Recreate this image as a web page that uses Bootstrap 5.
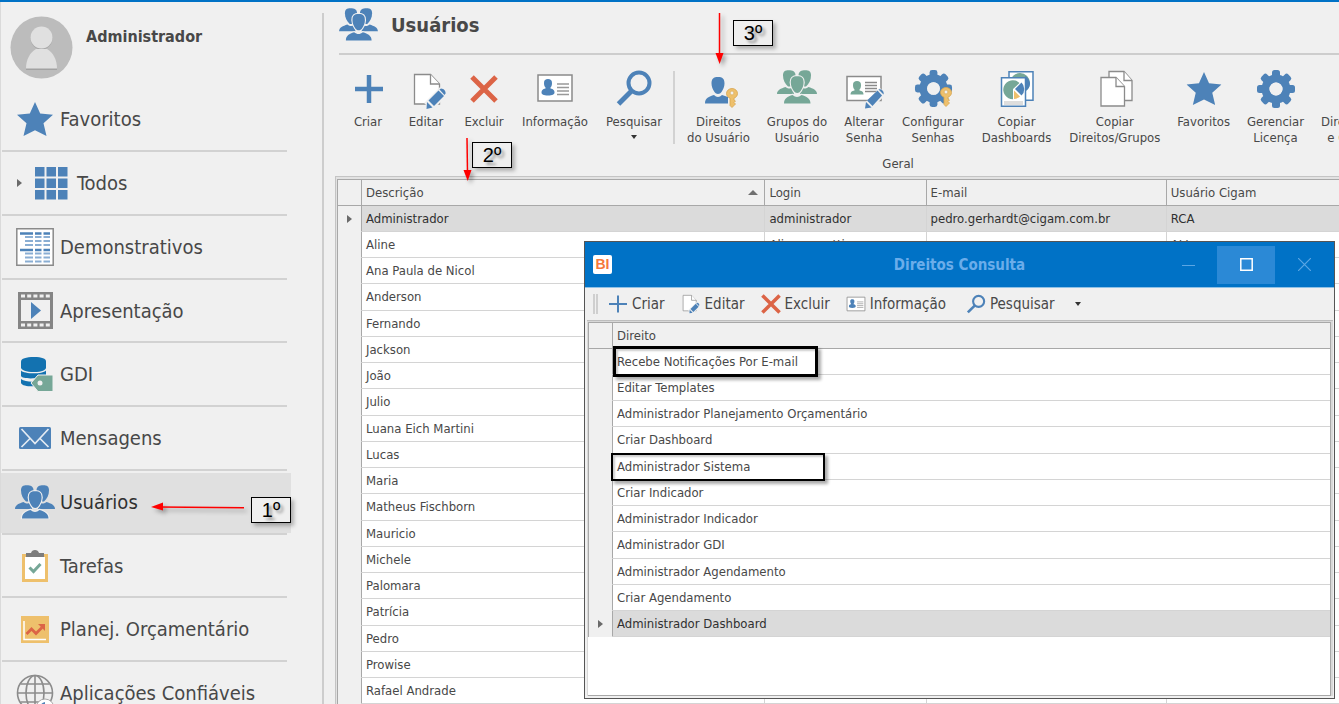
<!DOCTYPE html>
<html lang="pt-BR">
<head>
<meta charset="utf-8">
<meta name="viewport" content="width=device-width, initial-scale=1">
<title>Usuários</title>
<link href="https://cdn.jsdelivr.net/npm/bootstrap@5.3.0/dist/css/bootstrap.min.css" rel="stylesheet">
<style>
  :root { --line:#cdcdcd; --ink:#484848; --brand:#0072c6; }
  body { font-family:"DejaVu Sans Condensed","DejaVu Sans",sans-serif; font-size:13px; line-height:16px; color:var(--ink); background:#f0f0f0; overflow:hidden; }
  svg { display:block; flex:none; }
  .app-shell { border-top:2px solid var(--brand); }
  .side-pane { width:324px; border-left:1px solid #dadada; }
  .side-pane::after { content:""; position:absolute; right:0; top:11px; bottom:0; width:2px; background:var(--line); }
  .profile { height:86px; padding:14px 0 0 9px; gap:13px; }
  .profile strong { font-size:16px; line-height:20px; margin-top:11px; }
  .side-menu li { height:64px; padding-left:1px; }
  .side-menu li:nth-child(4n) { height:63px; }
  .side-menu a { width:285px; height:100%; border-bottom:2px solid #d2d2d2; color:var(--ink); text-decoration:none; font-size:20px; line-height:24px; padding-left:12px; gap:4px; }
  .side-menu .icon-box { width:42px; display:flex; justify-content:center; }
  .side-menu .sub-entry { gap:9px; padding-left:15px; }
  .side-menu .active-entry { width:290px; background:linear-gradient(#e0e0e0,#e0e0e0) 0 2px / 100% 60px no-repeat; }
  .side-menu .active-entry a { color:#303030; }
  .title-bar { height:53px; margin-left:15px; border-bottom:2px solid var(--line); padding-bottom:6px; gap:13px; }
  .title-bar h1 { font-size:20px; line-height:24px; font-weight:700; margin:0; }
  .ribbon { height:121px; padding:14px 0 0 15px; white-space:nowrap; }
  .tool-btn { border:0; background:none; padding:0 9px; min-width:56px; color:inherit; line-height:16px; flex:none; }
  .tool-btn svg { margin:0 auto 5px; width:40px; height:40px; }
  .tool-btn.snug { padding:0 8px; }
  .ribbon-split { width:2px; height:73px; margin:2px 3px 0 2px; background:#d2d2d2; flex:none; }
  .group-label { width:440px; margin-top:10px; text-align:center; }
  .grid-frame { margin-left:11px; border:solid #c4c4c4; border-width:1px 0 0 1px; padding:2px 0 0 1px; background:#e2e2e2; }
  .data-grid { width:100%; table-layout:fixed; border-collapse:separate; border-spacing:0; background:#fff; white-space:nowrap; border-top:1px solid #a8a8a8; border-left:1px solid #a8a8a8; }
  .data-grid tr { height:26px; }
  .data-grid tbody tr:nth-child(4n) { height:27px; }
  .data-grid th { font-weight:400; background:#f0f0f0; padding:0 4px; border-right:1px solid #a8a8a8; border-bottom:1px solid #a8a8a8; }
  .data-grid td { padding:0 4px; border-right:1px solid #d4d4d4; border-bottom:1px solid #d4d4d4; }
  .data-grid tbody th { border-bottom-color:#f0f0f0; padding:0; }
  .data-grid .chosen td { background:#dbdbdb; color:#303030; }
  .data-grid col.mark-col { width:24px; }
  .data-grid th:last-child, .data-grid td:last-child { border-right:0; }
  .tri { display:block; width:0; height:0; border:4px solid transparent; border-left:5px solid #6a6a6a; border-right:0; margin:auto; }
  .tri-down { display:block; width:0; height:0; border:3px solid transparent; border-top:4px solid #333; border-bottom:0; margin:5px auto 0; }
  .tri-up { width:0; height:0; border:5px solid transparent; border-bottom:5px solid #707070; border-top:0; margin-right:2px; }
  .dialog-win { position:absolute; left:584px; right:4px; top:241px; border:1px solid #555; background:#f0f0f0; z-index:5; }
  .dialog-head { height:46px; background:var(--brand); border-bottom:1px solid #8fc1e6; padding:0 1px 0 8px; }
  .dialog-head h2 { font-size:15px; line-height:20px; font-weight:700; color:#6badea; margin:0; position:absolute; left:0; right:0; text-align:center; pointer-events:none; }
  .bi-logo { width:19px; height:19px; border-radius:2px; background:#fff; color:#f5793b; font:700 14px/19px "Liberation Sans",sans-serif; text-align:center; }
  .win-btn { width:58px; height:38px; border:0; background:none; display:flex; align-items:center; justify-content:center; }
  .win-btn.lit { background:#2b89d6; }
  .dialog-tools { height:32px; padding-left:8px; gap:16px; }
  .dialog-tools button { border:0; background:none; padding:0; color:inherit; font-size:15px; line-height:20px; display:flex; align-items:center; gap:4px; }
  .grip { width:5px; height:20px; border:solid #cfcfcf; border-width:0 2px 0 2px; margin-right:-6px; }
  .dialog-grid { margin:0 1px 2px 2px; padding:1px 2px 0 1px; border-top:1px solid #bdbdbd; background:#d8d8d8; }
  .dialog-grid > div { border:solid #a8a8a8; border-width:0 1px 1px 0; background:#fff; padding-bottom:58px; }
  .boxed { position:absolute; border:3px solid #000; box-shadow:3px 3px 3px #0005, inset 2px 2px 2px #0003; inset:-3px auto -3px 0; width:205px; }
  .boxed.second { width:214px; border-width:2px; inset:-1px auto -2px -2px; }
  .step { position:absolute; width:40px; height:26px; border:1px solid #000; background:#efefef; box-shadow:3px 3px 4px #0004; color:#000; font:20px/24px "Liberation Sans",sans-serif; text-align:center; text-shadow:3px 3px 3px #0006; z-index:6; }
  .arrow { position:absolute; z-index:6; filter:drop-shadow(3px 3px 2px #0005); }
</style>
</head>
<body>
<svg width="0" height="0" class="position-absolute" aria-hidden="true">
  <symbol id="people" viewBox="0 0 40 34">
    <g fill="currentColor">
      <path d="M6 5.500C6 1.500 8 .3 11.800 .3S18.500 1.500 18.500 5.500C18.500 9 18 14 15 16.500h-4C8 14 6 10 6 5.500z"/>
      <path d="M34 5.500C34 1.500 32 .3 28.200 .3S21.500 1.500 21.500 5.500c0 3.500.5 8.500 3.500 11h4c3-2.500 5-6.500 5-11z"/>
      <path d="M0 24c0-4 4-5.500 8.500-7 3 2 5 2 6.500.5L17 24zM40 24c0-4-4-5.500-8.500-7-3 2-5 2-6.500.5L23 24z"/>
      <path stroke="#f0f0f0" stroke-width="2.400" paint-order="stroke" d="M7 33.500c0-5 3.500-7 8.500-8.500 3 2.500 6 2.500 9 0 5 1.500 9 3.500 9 8.500z"/>
      <path stroke="#f0f0f0" stroke-width="2.400" paint-order="stroke" d="M13.800 12.500c0-4.500 1.700-6.300 6.400-6.300s6.400 1.800 6.400 6.300c0 3-1.200 6-3 8.500-1.500 2.500-5.300 2.500-6.800 0-1.800-2.500-3-5.500-3-8.500z"/>
    </g>
  </symbol>
  <symbol id="star" viewBox="0 0 36 34"><path fill="#4d82b8" d="M18 0l5.200 11.500L36 12.800l-9.500 8.500L29.500 34 18 28.300 6.500 34l3-12.700L0 12.800l12.800-1.300z"/></symbol>
  <symbol id="plus" viewBox="0 0 40 40"><path fill="none" stroke="#4d82b8" stroke-width="4.500" d="M21 6v28M7 20h28"/></symbol>
  <symbol id="cross" viewBox="0 0 40 40"><path fill="none" stroke="#dc6446" stroke-width="5" d="M8 8l24 24M32 8L8 32"/></symbol>
  <symbol id="page-edit" viewBox="0 0 40 40">
    <path fill="#fff" stroke="#8b8b8b" stroke-width="1.300" d="M8.500 5.500h16l9 9.500v20h-25z"/><path fill="#fff" stroke="#8b8b8b" stroke-width="1.300" d="M24.500 5.500V15h9"/>
    <path stroke="#f0f0f0" stroke-width="11" d="M22 38l16-16"/><g fill="#4d82b8"><path d="M21 33l5.500 5.500-6 1.500z"/><path d="M22.500 31.500L32.500 21.500 38 27 28 37z"/><path d="M33.500 20.500l1.500-1c3 0 5 3 4.500 5L38.500 26z"/></g>
  </symbol>
  <symbol id="id-card" viewBox="0 0 40 40">
    <path fill="#fff" stroke="#8b8b8b" stroke-width="1.500" d="M3 6h34v26H3z"/>
    <path fill="#4d82b8" d="M9 14c0-3 1.500-4 4-4s4 1 4 4c0 2-.5 3.500-1.500 4.500v1c3 .5 4 2 4 4 0 2-2 3-6.500 3s-6.500-1-6.500-3 1-3.500 4-4v-1C9.500 17.500 9 16 9 14z"/>
    <path stroke="#999" stroke-width="1.400" d="M22 15h12M22 18.500h12M22 22h12M22 25.500h12"/>
  </symbol>
  <symbol id="lens" viewBox="0 0 40 40"><circle cx="25" cy="14" r="10.500" fill="none" stroke="#4d82b8" stroke-width="4"/><path stroke="#4d82b8" stroke-width="5" d="M18 21.500L4.500 35"/></symbol>
  <symbol id="key" viewBox="0 0 12 20"><path fill="#eec06c" stroke="#d7a44f" stroke-width=".8" d="M6 .5c3 0 5.500 2.200 5.500 5 0 2.300-1.500 4-3.500 4.700V12l1.500 1L8 14.500l1.500 1.500L8 17.500 6 19.500l-2-2v-7.300C2 9.500.5 7.800.5 5.500c0-2.800 2.500-5 5.500-5z"/><circle cx="6" cy="5" r="1.900" fill="#f0f0f0" stroke="#d7a44f" stroke-width=".6"/></symbol>
  <symbol id="gear" viewBox="0 0 40 40">
    <g fill="#4d82b8"><g id="teeth"><rect x="16" y="1" width="8" height="9" rx="2.500"/><rect x="16" y="30" width="8" height="9" rx="2.500"/><rect x="1" y="16" width="9" height="8" rx="2.500"/><rect x="30" y="16" width="9" height="8" rx="2.500"/></g><use href="#teeth" transform="rotate(45 20 20)"/></g>
    <circle cx="20" cy="20" r="10.500" fill="none" stroke="#4d82b8" stroke-width="8"/><circle cx="20" cy="20" r="6.500" fill="#f0f0f0"/>
  </symbol>
  <symbol id="globe" viewBox="0 0 38 38"><g fill="none" stroke="#8c8c8c" stroke-width="1.600"><circle cx="19" cy="19" r="17.500"/><ellipse cx="19" cy="19" rx="9" ry="17.500"/><path d="M19 1v36M1 19h36M4.500 10h29M4.500 28h29"/></g><circle cx="29" cy="34" r="9" fill="#fff" stroke="#a8a8a8"/><path fill="#4d82b8" d="M29 28v6l-5 2c-1-4 1-7 5-8z"/></symbol>
</svg>

<div class="app-shell vh-100 d-flex position-relative overflow-hidden">
  <aside class="side-pane position-relative flex-shrink-0">
    <div class="profile d-flex align-items-start">
      <svg width="63" height="63" viewBox="0 0 63 63"><circle cx="31.500" cy="31.500" r="31" fill="#bcbcbc"/><path fill="#a2a2a2" d="M16 54h31v-2H16z"/><circle cx="31.500" cy="22.500" r="11" fill="#a8a8a8"/><path fill="#e0e0e0" d="M16 52.500c0-9 4-16 10-19.500h11c6 3.500 10 10.500 10 19.500z"/><circle cx="31.500" cy="21.500" r="11" fill="#e0e0e0"/></svg>
      <strong>Administrador</strong>
    </div>
    <nav aria-label="Principal">
      <ul class="side-menu list-unstyled m-0">
        <li><a href="#" class="d-flex align-items-center"><span class="icon-box"><svg width="36" height="34"><use href="#star"/></svg></span>Favoritos</a></li>
        <li><a href="#" class="sub-entry d-flex align-items-center"><span class="tri m-0 me-1"></span><svg width="33" height="33" viewBox="0 0 33 33"><path fill="#4d82b8" d="M0 0h9.500v9.500H0zM11.500 0H21v9.500h-9.500zM23 0h9.500v9.500H23zM0 11.500h9.500V21H0zM11.500 11.500H21V21h-9.500zM23 11.500h9.500V21H23zM0 23h9.500v9.500H0zM11.500 23H21v9.500h-9.500zM23 23h9.500v9.500H23z"/></svg>Todos</a></li>
        <li><a href="#" class="d-flex align-items-center"><span class="icon-box"><svg width="38" height="38" viewBox="0 0 38 38"><path fill="#fff" stroke="#8a8a8a" stroke-width="1.500" d="M.8.800h36.400v36.400H.8z"/><path stroke="#4d82b8" stroke-width="2.500" d="M4 5.500h13M19 5.500h6.500M27.500 5.500H34M4 22h13M19 22h6.500M27.500 22H34"/><path stroke="#8aaed3" stroke-width="2.200" d="M9 9h8M19 9h6.500M27.500 9H34M9 13h8M19 13h6.500M27.500 13H34M9 17h8M19 17h6.500M27.500 17H34M9 25.500h8M19 25.500h6.500M27.500 25.500H34M9 29.500h8M19 29.500h6.500M27.500 29.500H34M9 33.500h8M19 33.500h6.500M27.500 33.500H34"/></svg></span>Demonstrativos</a></li>
        <li><a href="#" class="d-flex align-items-center"><span class="icon-box"><svg width="35" height="37" viewBox="0 0 35 37"><path fill="#858585" d="M0 0h35v37H0z"/><path fill="#f0f0f0" d="M3 8h29v21H3z"/><path stroke="#f0f0f0" stroke-width="3" stroke-dasharray="4 2.200" d="M3 4h30M3 33h30"/><path fill="#4d82b8" d="M13 10l10 8.500L13 27z"/></svg></span>Apresentação</a></li>
        <li><a href="#" class="d-flex align-items-center"><span class="icon-box"><svg width="36" height="36" viewBox="0 0 36 36"><g fill="#1372b0"><path d="M4 5.500C4 2.500 9 1 17 1s12 1.500 12 4.500v6C29 14 25 16 17 16S4 14 4 11.500z"/><path d="M4 14.500c3 3.500 21 4 25 0V19c-1 3.500-24 5-25 1zM4 23c3 2.500 10 3 14 2.500l2 4.500c-5 .7-15 .5-16-3z"/></g><path fill="#76a797" stroke="#f0f0f0" d="M14 27l7-8h15v16.500H21z"/><circle cx="23" cy="27" r="2.500" fill="#f0f0f0"/></svg></span>GDI</a></li>
        <li><a href="#" class="d-flex align-items-center"><span class="icon-box"><svg width="34" height="22" viewBox="0 0 34 22"><rect x="1" width="32" height="22" rx="1.500" fill="#4d82b8"/><path fill="none" stroke="#e4ebf3" stroke-width="1.700" d="M3.500 2L17 16.500 30.500 2M3.500 20l8.500-8.500M30.500 20L22 11.500"/></svg></span>Mensagens</a></li>
        <li class="active-entry"><a href="#" class="d-flex align-items-center" aria-current="page"><span class="icon-box"><svg width="40" height="34" style="color:#4d82b8"><use href="#people"/></svg></span>Usuários</a></li>
        <li><a href="#" class="d-flex align-items-center"><span class="icon-box"><svg width="26" height="32" viewBox="0 0 26 32"><path fill="#fff" stroke="#eec06c" stroke-width="3" d="M1.500 5.500h23v25h-23z"/><path fill="#7d7d7d" d="M4 7V3h5C9.500 1 11 0 13 0s3.500 1 4 3h5v4z"/><path fill="none" stroke="#76a797" stroke-width="3" d="M7.500 17.500l4 4 7-7.500"/></svg></span>Tarefas</a></li>
        <li><a href="#" class="d-flex align-items-center"><span class="icon-box"><svg width="28" height="27" viewBox="0 0 28 27"><path fill="#eec06c" d="M0 0h28v27H0z"/><path fill="none" stroke="#fff" stroke-width="1.500" d="M3 5v18.500h22"/><path fill="none" stroke="#dc6446" stroke-width="2.800" d="M5.500 18l5-5 4.500 4.500 6-6"/><path fill="#dc6446" d="M17 8h7v7z"/></svg></span>Planej. Orçamentário</a></li>
        <li><a href="#" class="d-flex align-items-center"><span class="icon-box"><svg width="38" height="38"><use href="#globe"/></svg></span>Aplicações Confiáveis</a></li>
      </ul>
    </nav>
  </aside>

  <main class="flex-grow-1 overflow-hidden" style="min-width:0">
    <header class="title-bar d-flex align-items-center">
      <svg width="39" height="33" style="color:#4d82b8"><use href="#people"/></svg>
      <h1>Usuários</h1>
    </header>
    <div class="ribbon d-flex align-items-start" role="toolbar">
      <button type="button" class="tool-btn"><svg><use href="#plus"/></svg>Criar</button>
      <button type="button" class="tool-btn"><svg><use href="#page-edit"/></svg>Editar</button>
      <button type="button" class="tool-btn"><svg><use href="#cross"/></svg>Excluir</button>
      <button type="button" class="tool-btn"><svg><use href="#id-card"/></svg>Informação</button>
      <button type="button" class="tool-btn"><svg><use href="#lens"/></svg>Pesquisar<span class="tri-down"></span></button>
      <div class="ribbon-split"></div>
      <div>
        <div class="d-flex align-items-start">
          <button type="button" class="tool-btn"><svg viewBox="0 0 40 40"><path fill="#4d82b8" d="M13.500 14.500c0-5 2-6.500 6.500-6.500s6.500 1.500 6.500 6.500c0 3-1.300 6-3 8.500-1.500 2.500-5.500 2.500-7 0-1.700-2.500-3-5.500-3-8.500zM7 34.500c0-5.500 4-7 9-8.500 2.500 2.500 5.500 2.500 8 0l6 2v6.500z"/><use href="#key" x="28" y="19" width="12" height="20"/></svg>Direitos<br>do Usuário</button>
          <button type="button" class="tool-btn snug"><svg viewBox="0 0 40 40" style="color:#76a797"><use href="#people" x="0" y="1" width="40" height="34"/></svg>Grupos do<br>Usuário</button>
          <button type="button" class="tool-btn"><svg viewBox="0 0 40 40"><path fill="#fff" stroke="#8b8b8b" stroke-width="1.500" d="M3 7.500h34v24H3z"/><path fill="#76a797" d="M9 16c0-3 1.500-4 4-4s4 1 4 4c0 2-.5 3.500-1.500 4.500v1c3 .5 4 1.500 4 4h-13c0-2.500 1-3.500 4-4v-1C9.500 19.500 9 18 9 16z"/><path stroke="#8a8a8a" stroke-width="1.400" d="M21 13.500h12M21 16.500h12M21 19.500h12M21 22.500h12"/><path stroke="#f0f0f0" stroke-width="9" d="M23 38l16-16"/><g fill="#4d82b8"><path d="M22 33l5.500 5.500-6.500 1z"/><path d="M23 31.500L33.500 21.500 38 26.500 28.500 37z"/><path d="M34.500 20.500c3-1 6 2 5 5z"/></g></svg>Alterar<br>Senha</button>
          <button type="button" class="tool-btn"><svg viewBox="0 0 40 40"><use href="#gear" x="1" y="0" width="39" height="39"/><use href="#key" x="27" y="18" width="12" height="20"/></svg>Configurar<br>Senhas</button>
          <button type="button" class="tool-btn"><svg viewBox="0 0 40 40"><path fill="#fff" stroke="#4d82b8" stroke-width="1.500" d="M12 2.800h24v28.500H12z"/><circle cx="23" cy="14" r="10" fill="#76a797"/><path fill="#4d82b8" d="M28 7a10 10 0 0 1 5 7c0 4-2 7-5 8z"/><path fill="#fff" stroke="#4d82b8" stroke-width="1.500" d="M4.500 8.800h24v28.500h-24z"/><path fill="#76a797" d="M16 20v10.200A9.500 9.500 0 1 1 22.500 14z"/><path fill="#4d82b8" d="M18 20l6.500-6.500a9 9 0 0 1 0 13z"/><path fill="#eec06c" d="M17 21.500l6 6c-1.500 1.500-4 2.500-6 2.500z"/><path stroke="#bbb" d="M7 33h19M7 35h19"/></svg>Copiar<br>Dashboards</button>
          <button type="button" class="tool-btn"><svg viewBox="0 0 40 40"><g fill="#fff" stroke="#8b8b8b" stroke-width="1.300"><path d="M14 2.500h15l8 9v20H14z"/><path d="M29 2.500v9h8"/><path d="M6 8.500h15l8.500 9V37H6z"/><path d="M21 8.500v9h8.500"/></g></svg>Copiar<br>Direitos/Grupos</button>
          <button type="button" class="tool-btn snug"><svg viewBox="0 0 40 40"><use href="#star" x="2.500" y="3" width="35" height="33"/></svg>Favoritos</button>
          <button type="button" class="tool-btn"><svg><use href="#gear"/></svg>Gerenciar<br>Licença</button>
          <button type="button" class="tool-btn snug"><svg></svg>Direitos<br>e GDI</button>
        </div>
        <div class="group-label">Geral</div>
      </div>
    </div>
    <div class="grid-frame">
      <table class="data-grid">
        <colgroup><col class="mark-col"><col style="width:40.300%"><col style="width:16.100%"><col style="width:24%"><col></colgroup>
        <thead><tr><th></th><th><div class="d-flex align-items-center justify-content-between">Descrição<span class="tri-up"></span></div></th><th>Login</th><th>E-mail</th><th>Usuário Cigam</th></tr></thead>
        <tbody>
          <tr class="chosen"><th><span class="tri"></span></th><td>Administrador</td><td>administrador</td><td>pedro.gerhardt@cigam.com.br</td><td>RCA</td></tr>
          <tr><th></th><td>Aline</td><td>Aline.marotti</td><td></td><td>ALI</td></tr>
          <tr><th></th><td>Ana Paula de Nicol</td><td></td><td></td><td></td></tr>
          <tr><th></th><td>Anderson</td><td></td><td></td><td></td></tr>
          <tr><th></th><td>Fernando</td><td></td><td></td><td></td></tr>
          <tr><th></th><td>Jackson</td><td></td><td></td><td></td></tr>
          <tr><th></th><td>João</td><td></td><td></td><td></td></tr>
          <tr><th></th><td>Julio</td><td></td><td></td><td></td></tr>
          <tr><th></th><td>Luana Eich Martini</td><td></td><td></td><td></td></tr>
          <tr><th></th><td>Lucas</td><td></td><td></td><td></td></tr>
          <tr><th></th><td>Maria</td><td></td><td></td><td></td></tr>
          <tr><th></th><td>Matheus Fischborn</td><td></td><td></td><td></td></tr>
          <tr><th></th><td>Mauricio</td><td></td><td></td><td></td></tr>
          <tr><th></th><td>Michele</td><td></td><td></td><td></td></tr>
          <tr><th></th><td>Palomara</td><td></td><td></td><td></td></tr>
          <tr><th></th><td>Patrícia</td><td></td><td></td><td></td></tr>
          <tr><th></th><td>Pedro</td><td></td><td></td><td></td></tr>
          <tr><th></th><td>Prowise</td><td></td><td></td><td></td></tr>
          <tr><th></th><td>Rafael Andrade</td><td></td><td></td><td></td></tr>
        </tbody>
      </table>
    </div>
  </main>
</div>

<section class="dialog-win" role="dialog" aria-labelledby="dialog-title">
  <div class="dialog-head d-flex align-items-center position-relative">
    <span class="bi-logo">BI</span>
    <h2 id="dialog-title">Direitos Consulta</h2>
    <div class="d-flex ms-auto">
      <button type="button" class="win-btn" aria-label="Minimizar"><svg width="13" height="13"><path stroke="#5ba6e4" d="M0 7.500h13"/></svg></button>
      <button type="button" class="win-btn lit" aria-label="Maximizar"><svg width="13" height="13"><path fill="none" stroke="#fff" stroke-width="1.500" d="M.8.800h11.400v11.400H.8z"/></svg></button>
      <button type="button" class="win-btn" aria-label="Fechar"><svg width="13" height="13"><path stroke="#5ba6e4" stroke-width="1.200" d="M0 0l13 13M13 0L0 13"/></svg></button>
    </div>
  </div>
  <div class="dialog-tools d-flex align-items-center" role="toolbar">
    <span class="grip"></span>
    <button type="button"><svg width="20" height="20" viewBox="0 0 20 20"><path stroke="#4d82b8" stroke-width="2" d="M10 1.500v17M1 10h18"/></svg>Criar</button>
    <button type="button"><svg width="20" height="20" viewBox="6 3 35 38"><use href="#page-edit" width="40" height="40"/></svg>Editar</button>
    <button type="button"><svg width="20" height="20" viewBox="6 6 28 28"><use href="#cross" width="40" height="40"/></svg>Excluir</button>
    <button type="button"><svg width="20" height="20" viewBox="1 0 38 38"><use href="#id-card" width="40" height="40"/></svg>Informação</button>
    <button type="button" class="ms-1"><svg width="20" height="20" viewBox="2 0 36 38"><use href="#lens" width="40" height="40"/></svg>Pesquisar<span class="tri-down m-0 ms-3"></span></button>
  </div>
  <div class="dialog-grid"><div>
    <table class="data-grid">
      <colgroup><col class="mark-col"><col></colgroup>
      <thead><tr><th></th><th>Direito</th></tr></thead>
      <tbody>
        <tr><th></th><td class="position-relative">Recebe Notificações Por E-mail<span class="boxed"></span></td></tr>
        <tr><th></th><td>Editar Templates</td></tr>
        <tr><th></th><td>Administrador Planejamento Orçamentário</td></tr>
        <tr><th></th><td>Criar Dashboard</td></tr>
        <tr><th></th><td class="position-relative">Administrador Sistema<span class="boxed second"></span></td></tr>
        <tr><th></th><td>Criar Indicador</td></tr>
        <tr><th></th><td>Administrador Indicador</td></tr>
        <tr><th></th><td>Administrador GDI</td></tr>
        <tr><th></th><td>Administrador Agendamento</td></tr>
        <tr><th></th><td>Criar Agendamento</td></tr>
        <tr class="chosen"><th><span class="tri"></span></th><td>Administrador Dashboard</td></tr>
      </tbody>
    </table>
  </div></div>
</section>

<span class="step" style="left:251px;top:497px">1º</span>
<span class="step" style="left:472px;top:142px">2º</span>
<span class="step" style="left:733px;top:20px">3º</span>
<svg class="arrow" style="left:151px;top:501px" width="94" height="12"><path stroke="#f00" stroke-width="1.500" d="M8 6l85 .7"/><path fill="#f00" d="M0 6l12-4.500v8z"/></svg>
<svg class="arrow" style="left:462px;top:138px" width="12" height="43"><path stroke="#f00" stroke-width="1.500" d="M5 0l.5 35"/><path fill="#f00" d="M1.500 32H9.500L5.700 43z"/></svg>
<svg class="arrow" style="left:714px;top:13px" width="12" height="51"><path stroke="#f00" stroke-width="1.500" d="M5.500 0v42"/><path fill="#f00" d="M1.500 40H9.500L5.600 51z"/></svg>
<script src="https://cdn.jsdelivr.net/npm/bootstrap@5.3.0/dist/js/bootstrap.bundle.min.js"></script>
</body>
</html>
